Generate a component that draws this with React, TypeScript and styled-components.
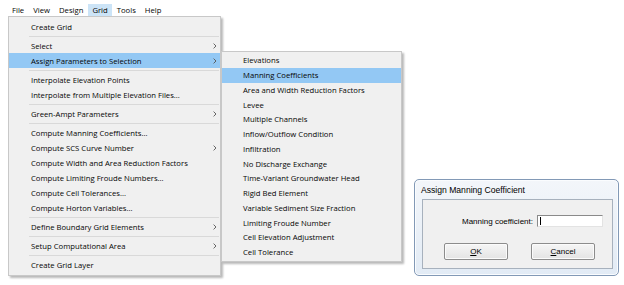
import React from 'react';
import styled, { createGlobalStyle } from 'styled-components';

const GlobalStyle = createGlobalStyle`
  html, body {
    margin: 0;
    padding: 0;
    background: #ffffff;
  }
  body {
    width: 624px;
    height: 285px;
    overflow: hidden;
    font-family: "Open Sans", "Noto Sans", sans-serif;
    color: #050505;
  }
`;

const Page = styled.div`
  width: 624px;
  height: 285px;
  display: flex;
  flex-direction: column;
`;

const MenuBar = styled.div`
  height: 16px;
  padding: 4px 0 0 8px;
  box-sizing: border-box;
  display: flex;
  align-items: stretch;
`;

const MenuTitle = styled.div<{ active?: boolean }>`
  font-size: 7.7px;
  line-height: 12px;
  padding: 0 4px;
  margin-right: 1px;
  background: ${(p) => (p.active ? '#cce4f7' : 'transparent')};
`;

const Workspace = styled.div`
  flex: 1;
  display: flex;
  align-items: flex-start;
`;

const Dropdown = styled.div`
  position: relative;
  margin-left: 8px;
  width: 213px;
  box-sizing: border-box;
  background: #f0f0f0;
  border: 1px solid #c8c8c8;
  box-shadow: 2px 2px 2px rgba(0, 0, 0, 0.28);
  padding: 2px 0 3px;
  display: flex;
  flex-direction: column;
`;

const Item = styled.div<{ active?: boolean }>`
  position: relative;
  height: 15px;
  display: flex;
  align-items: center;
  justify-content: space-between;
  padding: 0 3px 0 22px;
  font-size: 7.7px;
  white-space: nowrap;
  background: ${(p) => (p.active ? '#93c8f4' : 'transparent')};
`;

const Separator = styled.div`
  height: 1px;
  margin: 2px 1px 1px 20px;
  background: #d9d9d9;
`;

const SubMenu = styled.div`
  position: absolute;
  left: calc(100% + 1px);
  top: -2px;
  width: 181px;
  box-sizing: border-box;
  background: #f0f0f0;
  border: 1px solid #c8c8c8;
  box-shadow: 2px 2px 2px rgba(0, 0, 0, 0.28);
  padding: 1px 0 1px;
  display: flex;
  flex-direction: column;
  z-index: 2;
`;

const SubItem = styled(Item)`
  height: 14.75px;
  padding-left: 21px;
`;

const Chevron = () => (
  <svg width="4" height="6" viewBox="0 0 4 6">
    <polyline points="0.6,0.6 3,3 0.6,5.4" fill="none" stroke="#555" strokeWidth="0.9" />
  </svg>
);

const Dialog = styled.div`
  margin: 163px 5px 0 auto;
  width: 205px;
  height: 97px;
  box-sizing: border-box;
  border: 1px solid #8299b6;
  border-radius: 5px;
  background: linear-gradient(#f3f6fa, #e2ebf5);
  display: flex;
  flex-direction: column;
  box-shadow: inset 0 0 0 1px #fafcfe;
`;

const TitleBar = styled.div`
  height: 19px;
  padding-left: 6px;
  display: flex;
  align-items: center;
  font-family: "Liberation Sans", Arial, sans-serif;
  font-size: 8.6px;
  color: #000;
`;

const Client = styled.div`
  flex: 1;
  margin: 0 5px 6px 7px;
  background: #f0f0f0;
  border: 1px solid #a7b1bd;
  display: flex;
  flex-direction: column;
  padding-top: 15px;
  font-family: "Liberation Sans", Arial, sans-serif;
  font-size: 8px;
  color: #000;
`;

const FieldRow = styled.div`
  display: flex;
  justify-content: flex-end;
  align-items: center;
  gap: 4px;
  padding-right: 9px;
`;

const TextBox = styled.div`
  width: 66px;
  height: 12px;
  box-sizing: border-box;
  background: #fff;
  border-top: 1px solid #8a8a8a;
  border-left: 1px solid #8a8a8a;
  border-right: 1px solid #e3e3e3;
  border-bottom: 1px solid #e3e3e3;
  display: flex;
  align-items: center;
  padding-left: 2px;
`;

const Caret = styled.span`
  width: 1px;
  height: 8px;
  background: #000;
`;

const ButtonRow = styled.div`
  display: flex;
  gap: 23px;
  padding-left: 21px;
  margin-top: 16px;
`;

const Button = styled.div`
  width: 64px;
  height: 17px;
  box-sizing: border-box;
  border: 1px solid #8c8c8c;
  border-radius: 2px;
  background: linear-gradient(#f6f6f6, #e3e3e3);
  box-shadow: inset 0 0 0 1px #fbfbfb;
  display: flex;
  align-items: center;
  justify-content: center;
`;

const menuTitles = ['File', 'View', 'Design', 'Grid', 'Tools', 'Help'];

type Entry = { label: string; sub?: boolean; active?: boolean } | 'sep';

const gridMenu: Entry[] = [
  { label: 'Create Grid' },
  'sep',
  { label: 'Select', sub: true },
  { label: 'Assign Parameters to Selection', sub: true, active: true },
  'sep',
  { label: 'Interpolate Elevation Points' },
  { label: 'Interpolate from Multiple Elevation Files...' },
  'sep',
  { label: 'Green-Ampt Parameters', sub: true },
  'sep',
  { label: 'Compute Manning Coefficients...' },
  { label: 'Compute SCS Curve Number', sub: true },
  { label: 'Compute Width and Area Reduction Factors' },
  { label: 'Compute Limiting Froude Numbers...' },
  { label: 'Compute Cell Tolerances...' },
  { label: 'Compute Horton Variables...' },
  'sep',
  { label: 'Define Boundary Grid Elements', sub: true },
  'sep',
  { label: 'Setup Computational Area', sub: true },
  'sep',
  { label: 'Create Grid Layer' },
];

const assignMenu = [
  'Elevations',
  'Manning Coefficients',
  'Area and Width Reduction Factors',
  'Levee',
  'Multiple Channels',
  'Inflow/Outflow Condition',
  'Infiltration',
  'No Discharge Exchange',
  'Time-Variant Groundwater Head',
  'Rigid Bed Element',
  'Variable Sediment Size Fraction',
  'Limiting Froude Number',
  'Cell Elevation Adjustment',
  'Cell Tolerance',
];

const App: React.FC = () => {
  return (
    <Page>
      <GlobalStyle />
      <MenuBar>
        {menuTitles.map((t) => (
          <MenuTitle key={t} active={t === 'Grid'}>
            {t}
          </MenuTitle>
        ))}
      </MenuBar>
      <Workspace>
        <Dropdown>
          {gridMenu.map((entry, index) =>
            entry === 'sep' ? (
              <Separator key={`sep ${index}`} />
            ) : (
              <Item key={entry.label} active={entry.active}>
                <span>{entry.label}</span>
                {entry.sub && <Chevron />}
                {entry.active && (
                  <SubMenu>
                    {assignMenu.map((label) => (
                      <SubItem key={label} active={label === 'Manning Coefficients'}>
                        <span>{label}</span>
                      </SubItem>
                    ))}
                  </SubMenu>
                )}
              </Item>
            )
          )}
        </Dropdown>
        <Dialog>
          <TitleBar>Assign Manning Coefficient</TitleBar>
          <Client>
            <FieldRow>
              <span>Manning coefficient:</span>
              <TextBox>
                <Caret />
              </TextBox>
            </FieldRow>
            <ButtonRow>
              <Button>
                <span>
                  <u>O</u>K
                </span>
              </Button>
              <Button>
                <span>
                  <u>C</u>ancel
                </span>
              </Button>
            </ButtonRow>
          </Client>
        </Dialog>
      </Workspace>
    </Page>
  );
};

export default App;
